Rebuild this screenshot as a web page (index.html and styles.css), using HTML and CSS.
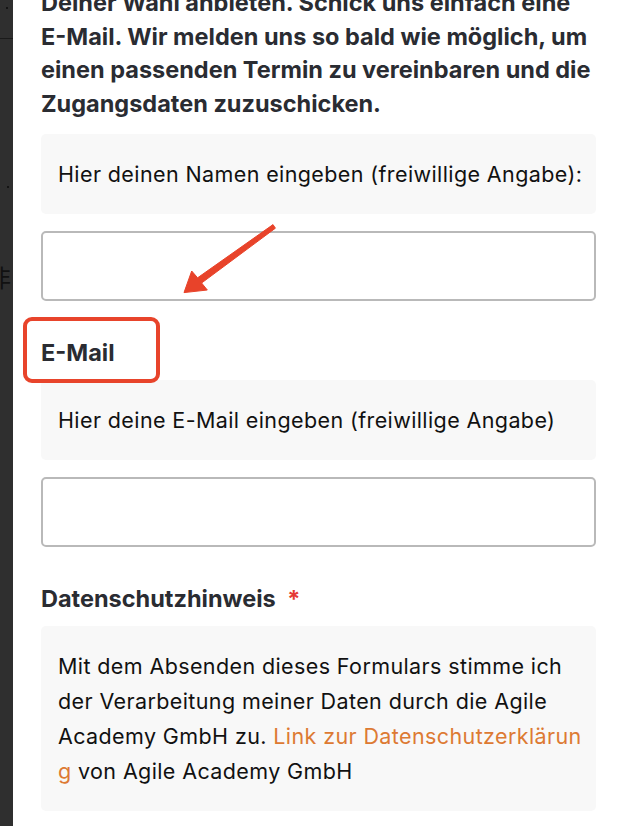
FILE: index.html
```html
<!DOCTYPE html>
<html lang="de">
<head>
<meta charset="utf-8">
<title>Formular</title>
<link rel="stylesheet" href="styles.css">
</head>
<body>
<div class="page">
  <aside class="sidebar">
    <span class="side-dot side-dot-top"></span>
    <span class="side-rule"></span>
    <span class="side-dot side-dot-mid"></span>
    <span class="side-glyph">非</span>
    <span class="side-paren">)</span>
  </aside>
  <main class="content">
    <p class="intro">Deiner Wahl anbieten. Schick uns einfach eine<br>E-Mail. Wir melden uns so bald wie möglich, um<br>einen passenden Termin zu vereinbaren und die<br>Zugangsdaten zuzuschicken.</p>

    <div class="field">
      <div class="hint">Hier deinen Namen eingeben (freiwillige Angabe):</div>
      <input class="text-input" type="text" aria-label="Name">
    </div>

    <div class="field">
      <h3 class="label label-marked">E-Mail<span class="highlight"></span></h3>
      <div class="hint">Hier deine E-Mail eingeben (freiwillige Angabe)</div>
      <input class="text-input" type="text" aria-label="E-Mail">
    </div>

    <div class="field">
      <h3 class="label">Datenschutzhinweis <span class="required">*</span></h3>
      <div class="hint hint-long">Mit dem Absenden dieses Formulars stimme ich der Verarbeitung meiner Daten durch die Agile Academy GmbH zu. <a class="link" href="#">Link zur Datenschutzerklärung</a> von Agile Academy GmbH</div>
    </div>
  </main>

  <svg class="arrow" width="100" height="76" viewBox="180 222 100 76" aria-hidden="true">
    <polygon points="273,224.6 197.6,277.8 191.7,271 184,292.6 207.3,290 201.6,283 275.4,228.2" fill="#e8432a" stroke="#e8432a" stroke-width="1" stroke-linejoin="round"/>
  </svg>
</div>
</body>
</html>
```

FILE: styles.css
```css
* { box-sizing: border-box; }

html, body {
  margin: 0;
  padding: 0;
  background: #ffffff;
}

body {
  font-family: "Inter", "Lato", "Liberation Sans", sans-serif;
  color: #111111;
  overflow: hidden;
}

.page {
  position: relative;
  display: flex;
  min-height: 826px;
  height: 826px;
  overflow: hidden;
}

.sidebar {
  position: relative;
  flex: 0 0 13px;
  background: #2f2f2f;
}

.side-rule {
  position: absolute;
  left: 0;
  right: 0;
  top: 38px;
  height: 1px;
  background: #1a1a1a;
}

.side-dot {
  position: absolute;
  width: 2px;
  height: 2px;
  border-radius: 50%;
  background: #0d0d0d;
}
.side-dot-top { left: 6px; top: 7px; }
.side-dot-mid { left: 7px; top: 186px; }

.side-glyph {
  position: absolute;
  left: -13px;
  top: 262px;
  font-family: "Noto Sans CJK SC", sans-serif;
  font-size: 24px;
  line-height: 30px;
  color: #111;
}

.side-paren {
  position: absolute;
  left: -6px;
  top: 406px;
  font-size: 20px;
  line-height: 24px;
  color: #111;
}

.content {
  flex: 1;
  padding: 0 24px 0 28px;
  min-width: 0;
}

.intro {
  margin: -14px 0 0 0;
  font-size: 23.5px;
  font-weight: 700;
  line-height: 33.5px;
  color: #2a2c32;
  letter-spacing: 0;
  white-space: nowrap;
}

.field {
  display: flex;
  flex-direction: column;
}

.hint {
  margin-top: 14px;
  background: #f8f8f8;
  border-radius: 5px;
  padding: 22.5px 11px 22.5px 17px;
  font-size: 21.5px;
  line-height: 35px;
  letter-spacing: 0.39px;
  color: #111111;
}

.hint-long {
  margin-top: 0;
}

.text-input {
  display: block;
  width: 100%;
  height: 70px;
  margin: 17px 0 0 0;
  border: 2px solid #b9b9b9;
  border-radius: 5px;
  background: #ffffff;
  font: inherit;
  padding: 0 16px;
}

.label {
  position: relative;
  margin: 35px 0 11px 0;
  font-size: 23.5px;
  font-weight: 700;
  line-height: 33px;
  color: #2a2c32;
  letter-spacing: 0;
}

.label + .hint { margin-top: 0; }

.required {
  color: #e53935;
  margin-left: 6px;
}

.highlight {
  position: absolute;
  left: -18px;
  top: -19px;
  width: 137px;
  height: 66px;
  border: 4.5px solid #e8442b;
  border-radius: 9px;
}

.link {
  color: #dd7a33;
  text-decoration: none;
  word-break: break-all;
}

.arrow {
  position: absolute;
  left: 180px;
  top: 222px;
}
```
